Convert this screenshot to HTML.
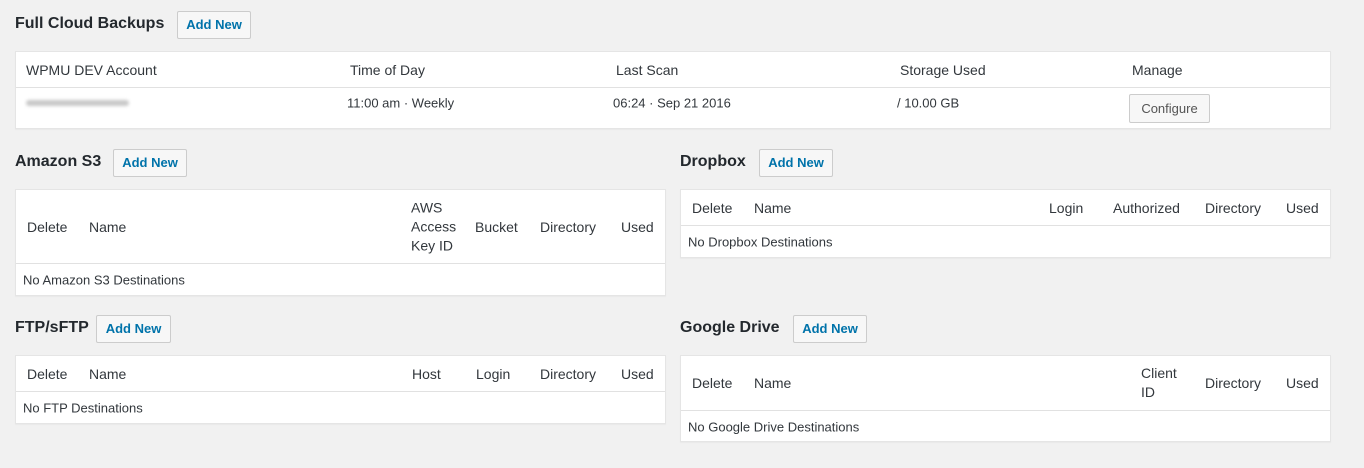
<!DOCTYPE html>
<html><head><meta charset="utf-8"><style>
*{margin:0;padding:0;box-sizing:border-box}
body{width:1364px;height:468px;background:#f1f1f1;font-family:"Liberation Sans",sans-serif;color:#32373c;position:relative;overflow:hidden}
.a{position:absolute;white-space:nowrap}
.h{font-size:16px;font-weight:bold;color:#23282d}
.btn{position:absolute;border:1px solid #ccc;background:#f7f7f7;color:#0073aa;font-size:13px;font-weight:bold;text-align:center;border-radius:2px;line-height:26px}
.box{position:absolute;background:#fff;border:1px solid #e5e5e5;box-shadow:0 1px 1px rgba(0,0,0,.04)}
.line{position:absolute;height:1px;background:#e1e1e1}
.t{font-size:14px;transform:translateY(-50%)}
.s{font-size:13px;transform:translateY(-50%)}
</style></head><body>
<div class="a h" style="left:15px;top:15px">Full Cloud Backups</div>
<div class="btn" style="left:177px;top:11px;width:74px;height:28px">Add New</div>
<div class="box" style="left:15px;top:51px;width:1316px;height:78px"></div>
<div class="line" style="left:16px;top:87px;width:1314px"></div>
<div class="a t" style="left:26px;top:70px">WPMU DEV Account</div>
<div class="a t" style="left:350px;top:70px">Time of Day</div>
<div class="a t" style="left:616px;top:70px">Last Scan</div>
<div class="a t" style="left:900px;top:70px">Storage Used</div>
<div class="a t" style="left:1132px;top:70px">Manage</div>
<div class="a" style="left:26px;top:100px;width:103px;height:6px;background:#c8c8c8;border-radius:3px;filter:blur(1.5px)"></div>
<div class="a s" style="left:347px;top:103px">11:00 am · Weekly</div>
<div class="a s" style="left:613px;top:103px">06:24 · Sep 21 2016</div>
<div class="a s" style="left:897px;top:103px">/ 10.00 GB</div>
<div class="btn" style="left:1129px;top:94px;width:81px;height:29px;color:#555;font-weight:normal;line-height:27px">Configure</div>

<div class="a h" style="left:15px;top:153px">Amazon S3</div>
<div class="btn" style="left:113px;top:149px;width:74px;height:28px">Add New</div>
<div class="box" style="left:15px;top:189px;width:651px;height:107px"></div>
<div class="line" style="left:16px;top:263px;width:649px"></div>
<div class="a t" style="left:27px;top:227px">Delete</div>
<div class="a t" style="left:89px;top:227px">Name</div>
<div class="a t" style="left:411px;top:227px;white-space:normal;line-height:19px;width:60px">AWS Access Key ID</div>
<div class="a t" style="left:475px;top:227px">Bucket</div>
<div class="a t" style="left:540px;top:227px">Directory</div>
<div class="a t" style="left:621px;top:227px">Used</div>
<div class="a s" style="left:23px;top:280px">No Amazon S3 Destinations</div>

<div class="a h" style="left:680px;top:153px">Dropbox</div>
<div class="btn" style="left:759px;top:149px;width:74px;height:28px">Add New</div>
<div class="box" style="left:680px;top:189px;width:651px;height:69px"></div>
<div class="line" style="left:681px;top:225px;width:649px"></div>
<div class="a t" style="left:692px;top:208px">Delete</div>
<div class="a t" style="left:754px;top:208px">Name</div>
<div class="a t" style="left:1049px;top:208px">Login</div>
<div class="a t" style="left:1113px;top:208px">Authorized</div>
<div class="a t" style="left:1205px;top:208px">Directory</div>
<div class="a t" style="left:1286px;top:208px">Used</div>
<div class="a s" style="left:688px;top:242px">No Dropbox Destinations</div>

<div class="a h" style="left:15px;top:319px">FTP/sFTP</div>
<div class="btn" style="left:96px;top:315px;width:75px;height:28px">Add New</div>
<div class="box" style="left:15px;top:355px;width:651px;height:69px"></div>
<div class="line" style="left:16px;top:391px;width:649px"></div>
<div class="a t" style="left:27px;top:374px">Delete</div>
<div class="a t" style="left:89px;top:374px">Name</div>
<div class="a t" style="left:412px;top:374px">Host</div>
<div class="a t" style="left:476px;top:374px">Login</div>
<div class="a t" style="left:540px;top:374px">Directory</div>
<div class="a t" style="left:621px;top:374px">Used</div>
<div class="a s" style="left:23px;top:408px">No FTP Destinations</div>

<div class="a h" style="left:680px;top:319px">Google Drive</div>
<div class="btn" style="left:793px;top:315px;width:74px;height:28px">Add New</div>
<div class="box" style="left:680px;top:355px;width:651px;height:87px"></div>
<div class="line" style="left:681px;top:410px;width:649px"></div>
<div class="a t" style="left:692px;top:383px">Delete</div>
<div class="a t" style="left:754px;top:383px">Name</div>
<div class="a t" style="left:1141px;top:383px;white-space:normal;line-height:19px;width:50px">Client ID</div>
<div class="a t" style="left:1205px;top:383px">Directory</div>
<div class="a t" style="left:1286px;top:383px">Used</div>
<div class="a s" style="left:688px;top:427px">No Google Drive Destinations</div>
</body></html>
